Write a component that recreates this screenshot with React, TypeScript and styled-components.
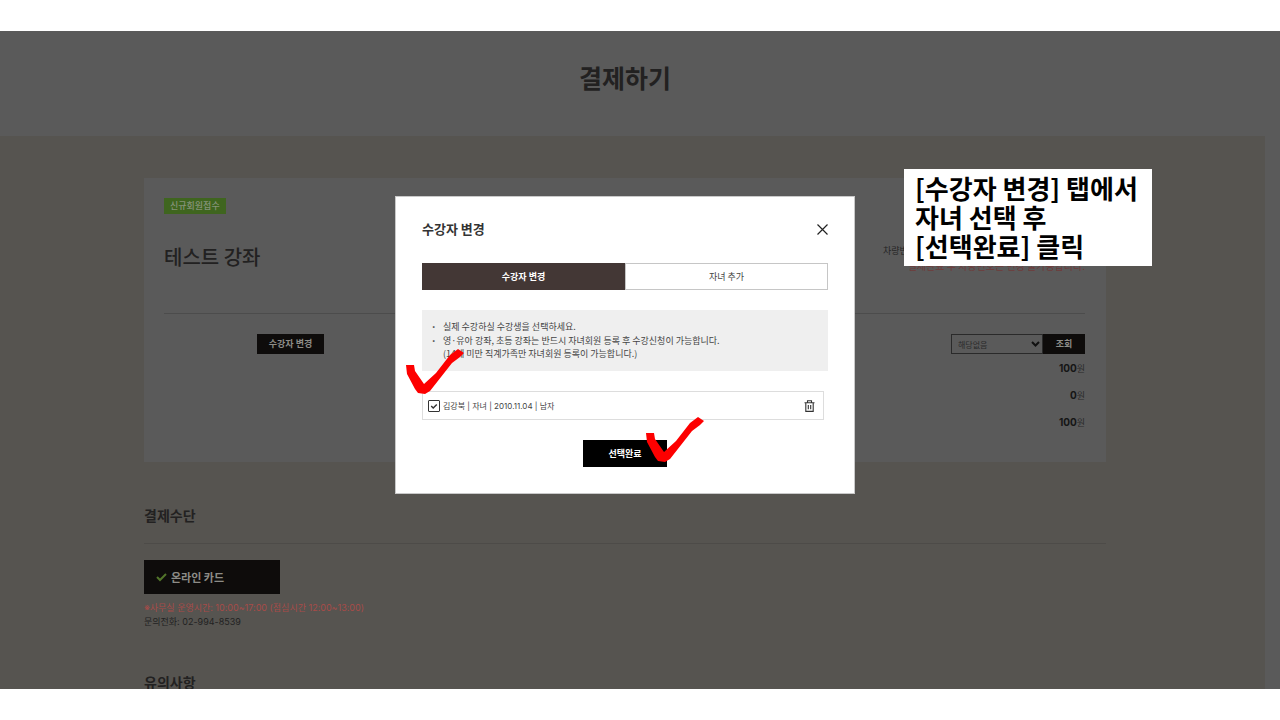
import React from 'react';
import styled, { createGlobalStyle } from 'styled-components';

const GlobalStyle = createGlobalStyle`
  *, *::before, *::after { box-sizing: border-box; }
  body {
    margin: 0;
    background: #fff;
    color: #222121;
    font-family: "Noto Sans CJK KR", sans-serif;
    font-size: 9px;
    line-height: 14px;
  }
  h1, h2, h3, p, ul { margin: 0; padding: 0; }
  button, input, select { font-family: inherit; margin: 0; }
`;

const Stage = styled.div`
  position: relative;
  height: calc(100vh - 62px);
  margin: 31px 0;
  overflow: hidden;
  background: #5a5a5a;
`;

const PageHeader = styled.header`
  padding: 26px 30px 39px 0;
  text-align: center;
`;

const PageTitle = styled.h1`
  font-size: 25px;
  line-height: 40px;
  font-weight: 700;
`;

const Body = styled.main`
  margin-right: 15px;
  padding: 42px 159px 42px 144px;
  min-height: 100%;
  background: #565450;
`;

const Card = styled.section`
  padding: 20px 21px 32px 20px;
  background: #5a5a5a;
`;

const Badge = styled.span`
  display: block;
  width: fit-content;
  padding: 0 6px;
  background: #3f651f;
  color: #86937a;
  line-height: 16px;
  font-weight: 500;
`;

const CourseRow = styled.div`
  display: flex;
  justify-content: space-between;
  height: 100px;
  padding-top: 27px;
  border-bottom: 1px solid #4c4c4c;
`;

const CourseTitle = styled.h2`
  font-size: 20px;
  line-height: 32px;
  font-weight: 500;
`;

const Vehicle = styled.div`
  width: 202px;
  padding-top: 3px;
  color: #252525;
`;

const Warning = styled.p`
  color: #6f3c3a;
  font-size: 10px;
  line-height: 16px;
  text-align: right;
  white-space: nowrap;
`;

const OptionRow = styled.div`
  display: flex;
  justify-content: space-between;
  padding: 20px 0 0 93px;
`;

const DarkButton = styled.button<{ $width: number }>`
  width: ${(p) => p.$width}px;
  height: 20px;
  padding: 0;
  border: 0;
  background: #0e0c0b;
  color: #8d8c87;
  font-size: 9px;
  line-height: 20px;
  font-weight: 700;
`;

const Discount = styled.div`
  display: flex;
`;

const SelectWrap = styled.div`
  position: relative;
  svg { position: absolute; right: 3px; top: 6px; pointer-events: none; }
`;

const Select = styled.select`
  appearance: none;
  display: block;
  width: 92px;
  height: 20px;
  padding: 0 6px;
  border: 1px solid #2a2a2a;
  border-radius: 0;
  background: transparent;
  color: #2a2a2a;
  font-size: 8px;
`;

const Prices = styled.div`
  display: grid;
  gap: 12px;
  padding-top: 7px;
  text-align: right;
  font-family: Inter, "Noto Sans CJK KR", sans-serif;
  font-size: 9px;
  color: #2a2a2a;
  b { font-size: 10px; font-weight: 700; color: #151515; }
`;

const SectionTitle = styled.h2<{ $ruled?: boolean }>`
  margin-top: 41px;
  padding-bottom: ${(p) => (p.$ruled ? 16 : 0)}px;
  border-bottom: ${(p) => (p.$ruled ? '1px solid #4d4b48' : '0')};
  font-size: 14px;
  line-height: 24px;
  font-weight: 700;
`;

const PayButton = styled.button`
  display: flex;
  align-items: center;
  gap: 4px;
  width: 136px;
  height: 34px;
  margin: 16px 0 7px;
  padding: 0 12px;
  border: 0;
  background: #0e0c0b;
  color: #8d8c87;
  font-size: 11px;
  font-weight: 700;
`;

const Info = styled.p<{ $alert?: boolean }>`
  font-family: Inter, "Noto Sans CJK KR", sans-serif;
  color: ${(p) => (p.$alert ? '#a84b48' : '#222')};
`;

const Overlay = styled.div`
  position: absolute;
  inset: 0 30px 30px 0;
  display: flex;
  align-items: center;
  justify-content: center;
`;

const Dialog = styled.div`
  position: relative;
  width: 100%;
  max-width: 460px;
  padding: 20px 26px 26px;
  background: #fff;
  color: #444;
  border: 1px solid #c9c9c9;
`;

const DialogHead = styled.div`
  display: flex;
  align-items: center;
  justify-content: space-between;
  height: 24px;
  margin-bottom: 22px;
`;

const DialogTitle = styled.h2`
  color: #333;
  font-size: 13px;
  line-height: 24px;
  font-weight: 700;
`;

const IconButton = styled.button`
  display: flex;
  padding: 0;
  border: 0;
  background: none;
  color: #222;
`;

const Tabs = styled.div`
  display: grid;
  grid-template-columns: 1fr 1fr;
  margin-bottom: 20px;
`;

const Tab = styled.button<{ $active?: boolean }>`
  height: 27px;
  padding: 0;
  border: 1px solid ${(p) => (p.$active ? '#433735' : '#c6c6c6')};
  background: ${(p) => (p.$active ? '#433735' : '#fff')};
  color: ${(p) => (p.$active ? '#fff' : '#444')};
  font-size: 9px;
  font-weight: ${(p) => (p.$active ? 700 : 400)};
`;

const Notice = styled.ul`
  padding: 10px;
  margin-bottom: 20px;
  background: #efefef;
  list-style: none;
  line-height: 13px;
`;

const NoticeItem = styled.li`
  display: flex;
  gap: 7px;
  margin-bottom: 1px;
  &::before { content: '•'; font-family: Inter, sans-serif; font-size: 6px; width: 4px; }
`;

const Person = styled.div`
  display: flex;
  align-items: center;
  justify-content: space-between;
  height: 29px;
  margin: 0 4px 20px 0;
  padding: 0 8px 0 5px;
  border: 1px solid #ddd;
`;

const PersonLabel = styled.label`
  display: flex;
  align-items: center;
  gap: 3px;
  font-family: Inter, "Noto Sans CJK KR", sans-serif;
  font-size: 8px;
`;

const CheckWrap = styled.span`
  position: relative;
  display: flex;
  svg { position: absolute; inset: 0; pointer-events: none; }
`;

const Check = styled.input`
  appearance: none;
  width: 12px;
  height: 12px;
  border: 1px solid #333;
  border-radius: 1px;
`;

const SubmitButton = styled.button`
  display: block;
  width: 84px;
  height: 27px;
  margin: 0 auto;
  padding: 0;
  border: 0;
  background: #000;
  color: #fff;
  font-size: 9px;
  font-weight: 700;
`;

const Pen = styled.svg<{ $x: number; $y: number }>`
  position: absolute;
  left: ${(p) => p.$x}px;
  top: ${(p) => p.$y}px;
  fill: #fd0000;
  pointer-events: none;
`;

const Callout = styled.p`
  position: absolute;
  top: 138px;
  right: 128px;
  width: 248px;
  padding: 4px 0 6px 11px;
  background: #fff;
  color: #000;
  font-size: 26px;
  line-height: 29px;
  font-weight: 700;
  white-space: nowrap;
`;

const penPath =
  'M0 0 H8 L9 6 L18 19 L30 8 L44 -10 L52 -16 L58 -12 L54 -8 L46 -2 L24 26 L19 29 L12 28 L9 24 L1 9 Z';

const PenCheck = ({ x, y }: { x: number; y: number }) => (
  <Pen $x={x} $y={y} width="58" height="45" viewBox="0 -16 58 45" aria-hidden="true">
    <path d={penPath} />
  </Pen>
);

export default function App() {
  return (
    <>
      <GlobalStyle />
      <Stage>
        <PageHeader>
          <PageTitle>결제하기</PageTitle>
        </PageHeader>
        <Body>
          <Card>
            <Badge>신규회원접수</Badge>
            <CourseRow>
              <CourseTitle>테스트 강좌</CourseTitle>
              <Vehicle>
                <p>차량번호</p>
                <Warning>결제완료 후 차량번호는 변경 불가능합니다.</Warning>
              </Vehicle>
            </CourseRow>
            <OptionRow>
              <DarkButton $width={67}>수강자 변경</DarkButton>
              <Discount>
                <SelectWrap>
                  <Select aria-label="할인">
                    <option>해당없음</option>
                  </Select>
                  <svg width="9" height="8" viewBox="0 0 9 8" fill="none" stroke="#111" strokeWidth="2">
                    <path d="M1 2 L4.5 5.5 L8 2" />
                  </svg>
                </SelectWrap>
                <DarkButton $width={42}>조회</DarkButton>
              </Discount>
            </OptionRow>
            <Prices>
              <p><b>100</b>원</p>
              <p><b>0</b>원</p>
              <p><b>100</b>원</p>
            </Prices>
          </Card>
          <SectionTitle $ruled>결제수단</SectionTitle>
          <PayButton>
            <svg width="11" height="10" viewBox="0 0 11 10" fill="none" stroke="#52752a" strokeWidth="2">
              <path d="M1 5 L4 8 L10 2" />
            </svg>
            온라인 카드
          </PayButton>
          <Info $alert>※사무실 운영시간: 10:00~17:00 (점심시간 12:00~13:00)</Info>
          <Info>문의전화: 02-994-8539</Info>
          <SectionTitle>유의사항</SectionTitle>
        </Body>
        <Overlay>
          <Dialog role="dialog" aria-labelledby="dialog-title">
            <DialogHead>
              <DialogTitle id="dialog-title">수강자 변경</DialogTitle>
              <IconButton aria-label="닫기">
                <svg width="11" height="11" viewBox="0 0 11 11" fill="none" stroke="currentColor" strokeWidth="1.2">
                  <path d="M0.5 0.5 L10.5 10.5 M10.5 0.5 L0.5 10.5" />
                </svg>
              </IconButton>
            </DialogHead>
            <Tabs role="tablist">
              <Tab role="tab" aria-selected="true" $active>수강자 변경</Tab>
              <Tab role="tab" aria-selected="false">자녀 추가</Tab>
            </Tabs>
            <Notice>
              <NoticeItem>실제 수강하실 수강생을 선택하세요.</NoticeItem>
              <NoticeItem>
                <span>
                  영·유아 강좌, 초등 강좌는 반드시 자녀회원 등록 후 수강신청이 가능합니다.
                  <br />
                  (14세 미만 직계가족만 자녀회원 등록이 가능합니다.)
                </span>
              </NoticeItem>
            </Notice>
            <Person>
              <PersonLabel>
                <CheckWrap>
                  <Check type="checkbox" defaultChecked />
                  <svg width="12" height="12" viewBox="0 0 12 12" fill="none" stroke="#333" strokeWidth="1.4">
                    <path d="M3.2 6 L5.2 8 L8.8 4.4" />
                  </svg>
                </CheckWrap>
                김강북 | 자녀 | 2010.11.04 | 남자
              </PersonLabel>
              <IconButton aria-label="삭제">
                <svg width="11" height="12" viewBox="0 0 11 12" fill="none" stroke="#333" strokeWidth="1.1">
                  <path d="M0.5 2.7 H10.5 M3.5 2.5 V0.7 H7.5 V2.5 M1.8 2.7 V11.4 H9.2 V2.7 M4.3 5 V9.3 M6.7 5 V9.3" />
                </svg>
              </IconButton>
            </Person>
            <SubmitButton>선택완료</SubmitButton>
            <PenCheck x={10} y={152} />
            <PenCheck x={250} y={220} />
          </Dialog>
        </Overlay>
        <Callout>
          [수강자 변경] 탭에서
          <br />
          자녀 선택 후
          <br />
          [선택완료] 클릭
        </Callout>
      </Stage>
    </>
  );
}
